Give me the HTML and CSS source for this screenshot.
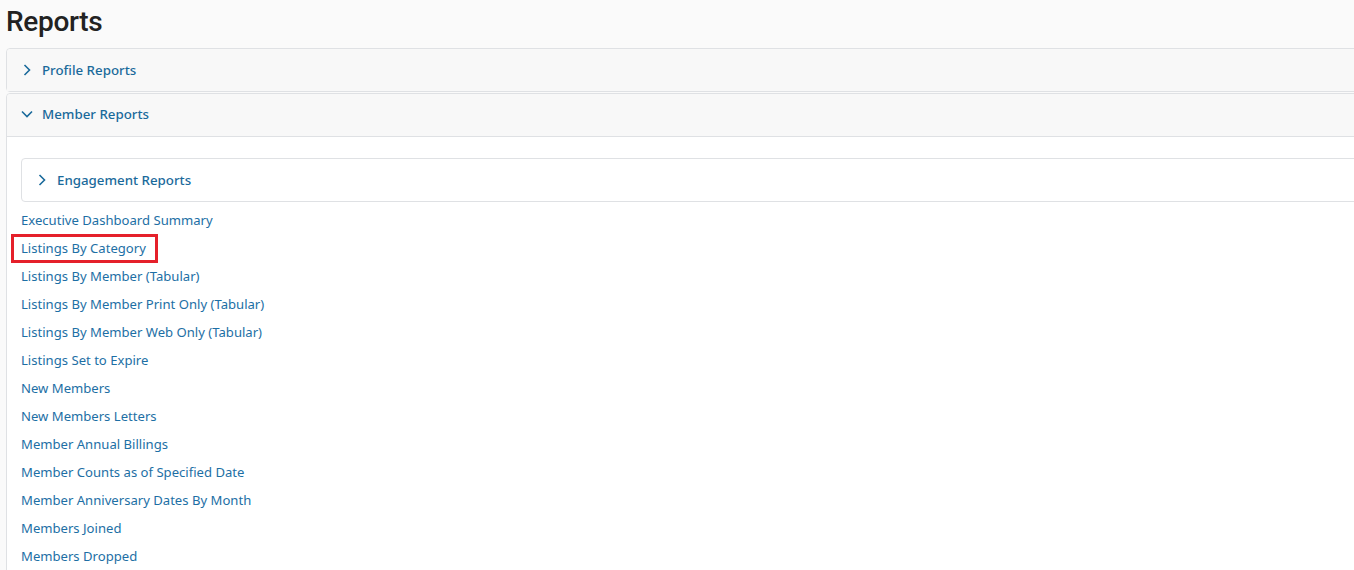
FILE: index.html
```html
<!DOCTYPE html>
<html>
<head>
<meta charset="utf-8">
<link rel="stylesheet" href="styles.css">
</head>
<body>
<div class="page">
  <h1 class="title">Reports</h1>
  <div class="accordion">
    <div class="card">
      <div class="card-header">
        <svg class="chev" viewBox="0 0 12 12"><path d="M3.5 1 L8.5 6 L3.5 11" /></svg>
        <span>Profile Reports</span>
      </div>
    </div>
    <div class="card card-open">
      <div class="card-header">
        <svg class="chev" viewBox="0 0 12 12"><path d="M1 3.5 L6 8.5 L11 3.5" /></svg>
        <span>Member Reports</span>
      </div>
      <div class="card-body">
        <div class="subcard">
          <svg class="chev" viewBox="0 0 12 12"><path d="M3.5 1 L8.5 6 L3.5 11" /></svg>
          <span>Engagement Reports</span>
        </div>
        <ul class="links">
          <li><a>Executive Dashboard Summary</a></li>
          <li><a class="marked">Listings By Category</a></li>
          <li><a>Listings By Member (Tabular)</a></li>
          <li><a>Listings By Member Print Only (Tabular)</a></li>
          <li><a>Listings By Member Web Only (Tabular)</a></li>
          <li><a>Listings Set to Expire</a></li>
          <li><a>New Members</a></li>
          <li><a>New Members Letters</a></li>
          <li><a>Member Annual Billings</a></li>
          <li><a>Member Counts as of Specified Date</a></li>
          <li><a>Member Anniversary Dates By Month</a></li>
          <li><a>Members Joined</a></li>
          <li><a>Members Dropped</a></li>
        </ul>
      </div>
    </div>
  </div>
</div>
</body>
</html>
```
FILE: styles.css
```css
html, body {
  margin: 0;
  padding: 0;
  background: #fafafa;
  overflow: hidden;
}
.page {
  padding: 0 0 0 6px;
  font-family: "Noto Sans", "Open Sans", sans-serif;
}
.title {
  margin: 0;
  height: 48px;
  font-family: Roboto, sans-serif;
  font-weight: 500;
  font-size: 28px;
  line-height: 44px;
  color: #222;
  letter-spacing: -0.3px;
}
.accordion {
  width: 1400px;
  display: flex;
  flex-direction: column;
  gap: 1px;
}
.card {
  border: 1px solid #dfe1e4;
  border-radius: 4px;
  background: #fff;
}
.card-header {
  box-sizing: border-box;
  height: 42px;
  background: #f8f8f8;
  display: flex;
  align-items: center;
  padding: 0 0 1px 14px;
  color: #1a6a9b;
  font-size: 13.3px;
  font-weight: 500;
  border-radius: 4px 4px 0 0;
}
.card-open .card-header {
  border-bottom: 1px solid #dfe1e4;
  height: 43px;
  padding-bottom: 2px;
}
.chev {
  width: 12px;
  height: 12px;
  margin-right: 9px;
  fill: none;
  stroke: #1a6a9b;
  stroke-width: 1.6;
}
.card-body {
  padding: 21px 0 0 14px;
  height: 500px;
}
.subcard {
  box-sizing: border-box;
  height: 44px;
  border: 1px solid #dfe1e4;
  border-radius: 4px;
  display: flex;
  align-items: center;
  padding: 0 0 1px 14px;
  color: #1a6a9b;
  font-size: 13.3px;
  font-weight: 500;
}
.links {
  list-style: none;
  margin: 4px 0 0;
  padding: 0;
}
.links li {
  height: 28px;
  line-height: 28px;
  font-size: 13.1px;
}
.links a {
  color: #1d6fa5;
  position: relative;
  display: inline-block;
}
.marked::after {
  content: "";
  position: absolute;
  left: -10px;
  right: -12px;
  top: 0;
  bottom: -1px;
  border: 3px solid #e5202a;
}
```
